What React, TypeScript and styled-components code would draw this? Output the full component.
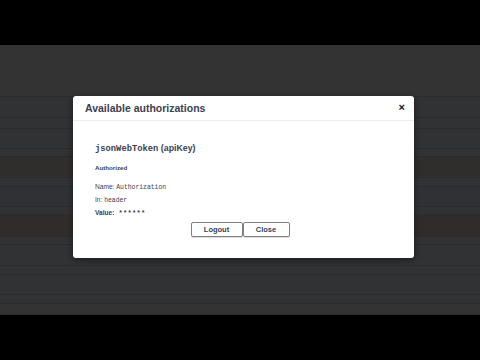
import React from 'react';
import styled, { createGlobalStyle } from 'styled-components';

const GlobalStyle = createGlobalStyle`
	html, body {
		margin: 0;
		padding: 0;
		background: #000;
	}
	* {
		box-sizing: border-box;
	}
`;

const StyledScreen = styled.div`
	width: 480px;
	height: 360px;
	display: flex;
	flex-direction: column;
	background: #000;
	overflow: hidden;
	font-family: 'Liberation Sans', Arial, sans-serif;
`;

const StyledLetterbox = styled.div`
	height: 45px;
	flex-shrink: 0;
	background: #000;
`;

const StyledStage = styled.div`
	position: relative;
	height: 270px;
	flex-shrink: 0;
	display: flex;
	flex-direction: column;
	background: #333333;
`;

const StyledStripe = styled.div<{ $h: number; $bg: string }>`
	height: ${(p) => p.$h}px;
	flex-shrink: 0;
	background: ${(p) => p.$bg};
	border-bottom: 1px solid #2a2b2c;
`;

const StyledModal = styled.div`
	position: absolute;
	left: 73px;
	top: 51px;
	width: 341px;
	height: 162px;
	background: #fff;
	border-radius: 3px;
	box-shadow: 0 2px 6px rgba(0, 0, 0, 0.45);
	display: flex;
	flex-direction: column;
`;

const StyledModalHeader = styled.div`
	height: 25px;
	display: flex;
	align-items: center;
	justify-content: space-between;
	padding: 0 9px 0 12px;
	border-bottom: 1px solid #ececec;
`;

const StyledTitle = styled.div`
	font-size: 10.5px;
	font-weight: bold;
	color: #3b4151;
`;

const StyledCloseX = styled.div`
	font-size: 11px;
	font-weight: bold;
	color: #111;
	line-height: 1;
	margin-top: -2px;
`;

const StyledBody = styled.div`
	padding: 21px 0 0 22px;
	display: flex;
	flex-direction: column;
	color: #3b4151;
`;

const StyledSchemeTitle = styled.div`
	font-size: 8.8px;
	font-weight: bold;
	line-height: 12px;
	color: #3b4151;
`;

const StyledCode = styled.span`
	font-family: 'Liberation Mono', 'DejaVu Sans Mono', monospace;
	font-weight: 600;
`;

const StyledStatus = styled.div`
	margin-top: 9px;
	font-size: 6.2px;
	font-weight: bold;
	line-height: 8px;
	color: #3b4151;
`;

const StyledInfoList = styled.div`
	margin-top: 9px;
	display: flex;
	flex-direction: column;
`;

const StyledInfoRow = styled.div<{ $bold?: boolean }>`
	font-size: 6.6px;
	line-height: 12px;
	font-weight: ${(p) => (p.$bold ? 'bold' : 'normal')};
	color: #3b4151;
`;

const StyledMono = styled.span`
	font-family: 'Liberation Mono', 'DejaVu Sans Mono', monospace;
	font-weight: normal;
	font-size: 6.4px;
	color: #3b4151;
`;

const StyledStars = styled.span`
	font-family: 'Liberation Mono', monospace;
	font-weight: bold;
	font-size: 7px;
	margin-left: 4px;
	letter-spacing: 0.3px;
`;

const StyledButtons = styled.div`
	display: flex;
	justify-content: center;
	margin-top: 3px;
	padding-right: 7px;
`;

const StyledButton = styled.button<{ $w: number }>`
	width: ${(p) => p.$w}px;
	height: 15px;
	padding: 0;
	background: #fff;
	border: 1px solid #808080;
	border-radius: 2px;
	font-family: 'Liberation Sans', Arial, sans-serif;
	font-size: 7.5px;
	font-weight: bold;
	color: #3b4151;
	box-shadow: 0 1px 1px rgba(0, 0, 0, 0.15);
`;

const stripes = [
	{ h: 52, bg: '#333333' },
	{ h: 21, bg: '#313233' },
	{ h: 11, bg: '#313233' },
	{ h: 20, bg: '#313233' },
	{ h: 8, bg: '#323232' },
	{ h: 21, bg: '#302e2c' },
	{ h: 9, bg: '#313233' },
	{ h: 20, bg: '#2f3134' },
	{ h: 8, bg: '#313233' },
	{ h: 22, bg: '#302c2c' },
	{ h: 8, bg: '#313233' },
	{ h: 21, bg: '#313233' },
	{ h: 9, bg: '#313233' },
	{ h: 20, bg: '#313233' },
	{ h: 9, bg: '#313233' },
	{ h: 11, bg: '#333333' },
];

export default function App() {
	return (
		<>
			<GlobalStyle />
			<StyledScreen>
				<StyledLetterbox />
				<StyledStage>
					{stripes.map((s, i) => (
						<StyledStripe key={i} $h={s.h} $bg={s.bg} />
					))}
					<StyledModal>
						<StyledModalHeader>
							<StyledTitle>Available authorizations</StyledTitle>
							<StyledCloseX>×</StyledCloseX>
						</StyledModalHeader>
						<StyledBody>
							<StyledSchemeTitle>
								<StyledCode>jsonWebToken</StyledCode>&nbsp;(apiKey)
							</StyledSchemeTitle>
							<StyledStatus>Authorized</StyledStatus>
							<StyledInfoList>
								<StyledInfoRow>
									Name: <StyledMono>Authorization</StyledMono>
								</StyledInfoRow>
								<StyledInfoRow>
									In: <StyledMono>header</StyledMono>
								</StyledInfoRow>
								<StyledInfoRow $bold>
									Value:<StyledStars>******</StyledStars>
								</StyledInfoRow>
							</StyledInfoList>
						</StyledBody>
						<StyledButtons>
							<StyledButton $w={52}>Logout</StyledButton>
							<StyledButton $w={47}>Close</StyledButton>
						</StyledButtons>
					</StyledModal>
				</StyledStage>
				<StyledLetterbox />
			</StyledScreen>
		</>
	);
}
